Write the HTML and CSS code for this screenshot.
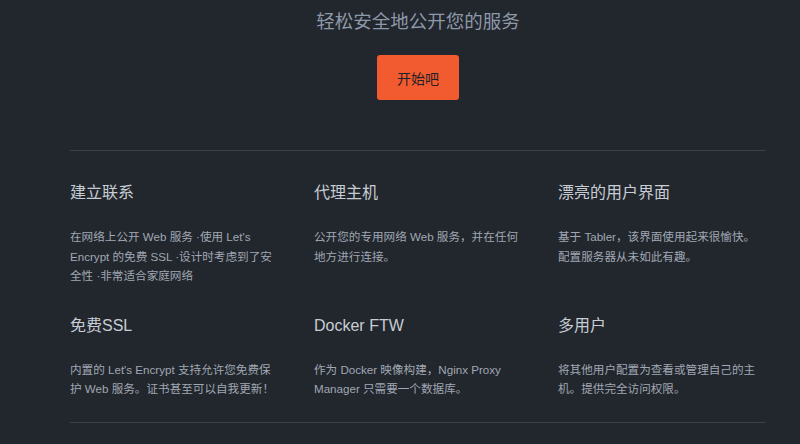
FILE: index.html
```html
<!DOCTYPE html>
<html lang="zh">
<head>
<meta charset="utf-8">
<link rel="stylesheet" href="styles.css">
</head>
<body>
<div class="page">
  <section class="hero">
    <h2 class="lead">轻松安全地公开您的服务</h2>
    <a class="btn" href="#">开始吧</a>
  </section>
  <hr class="divider">
  <section class="features">
    <div class="feature">
      <h3>建立联系</h3>
      <p>在网络上公开 Web 服务 ·使用 Let's Encrypt 的免费 SSL ·设计时考虑到了安全性 ·非常适合家庭网络</p>
    </div>
    <div class="feature">
      <h3>代理主机</h3>
      <p>公开您的专用网络 Web 服务，并在任何地方进行连接。</p>
    </div>
    <div class="feature">
      <h3>漂亮的用户界面</h3>
      <p>基于 Tabler，该界面使用起来很愉快。配置服务器从未如此有趣。</p>
    </div>
    <div class="feature">
      <h3>免费SSL</h3>
      <p>内置的 Let's Encrypt 支持允许您免费保护 Web 服务。证书甚至可以自我更新！</p>
    </div>
    <div class="feature">
      <h3>Docker FTW</h3>
      <p>作为 Docker 映像构建，Nginx Proxy Manager 只需要一个数据库。</p>
    </div>
    <div class="feature">
      <h3>多用户</h3>
      <p>将其他用户配置为查看或管理自己的主机。提供完全访问权限。</p>
    </div>
  </section>
  <hr class="divider">
</div>
</body>
</html>
```
FILE: styles.css
```css
html, body {
  margin: 0;
  padding: 0;
  background: #22262d;
  height: 100%;
  overflow: hidden;
}
body {
  font-family: "Liberation Sans", "Noto Sans CJK SC", sans-serif;
  color: #a3abb6;
}
.page {
  width: 696px;
  margin: 0 auto 0 70px;
}
.hero {
  display: flex;
  flex-direction: column;
  align-items: center;
  padding-top: 9px;
}
.lead {
  margin: 0;
  font-size: 18.5px;
  line-height: 26px;
  font-weight: 400;
  color: #8d99a8;
}
.btn {
  margin-top: 20px;
  width: 82px;
  height: 45px;
  display: flex;
  align-items: center;
  justify-content: center;
  background: #f25a2f;
  border-radius: 3px;
  color: #1f2227;
  font-size: 14px;
  text-decoration: none;
}
.divider {
  border: 0;
  height: 1px;
  background: #3b4048;
  margin: 50px 0 0;
}
.features {
  display: grid;
  grid-template-columns: repeat(3, 206px);
  column-gap: 38px;
  row-gap: 28px;
  padding-top: 30px;
}
.feature h3 {
  margin: 0;
  font-size: 16px;
  line-height: 24px;
  font-weight: 400;
  color: #c7cdd5;
}
.feature p {
  margin: 22px 0 0;
  font-size: 11.6px;
  line-height: 19.5px;
  color: #a0a8b3;
}
.features + .divider {
  margin-top: 23px;
}
```
